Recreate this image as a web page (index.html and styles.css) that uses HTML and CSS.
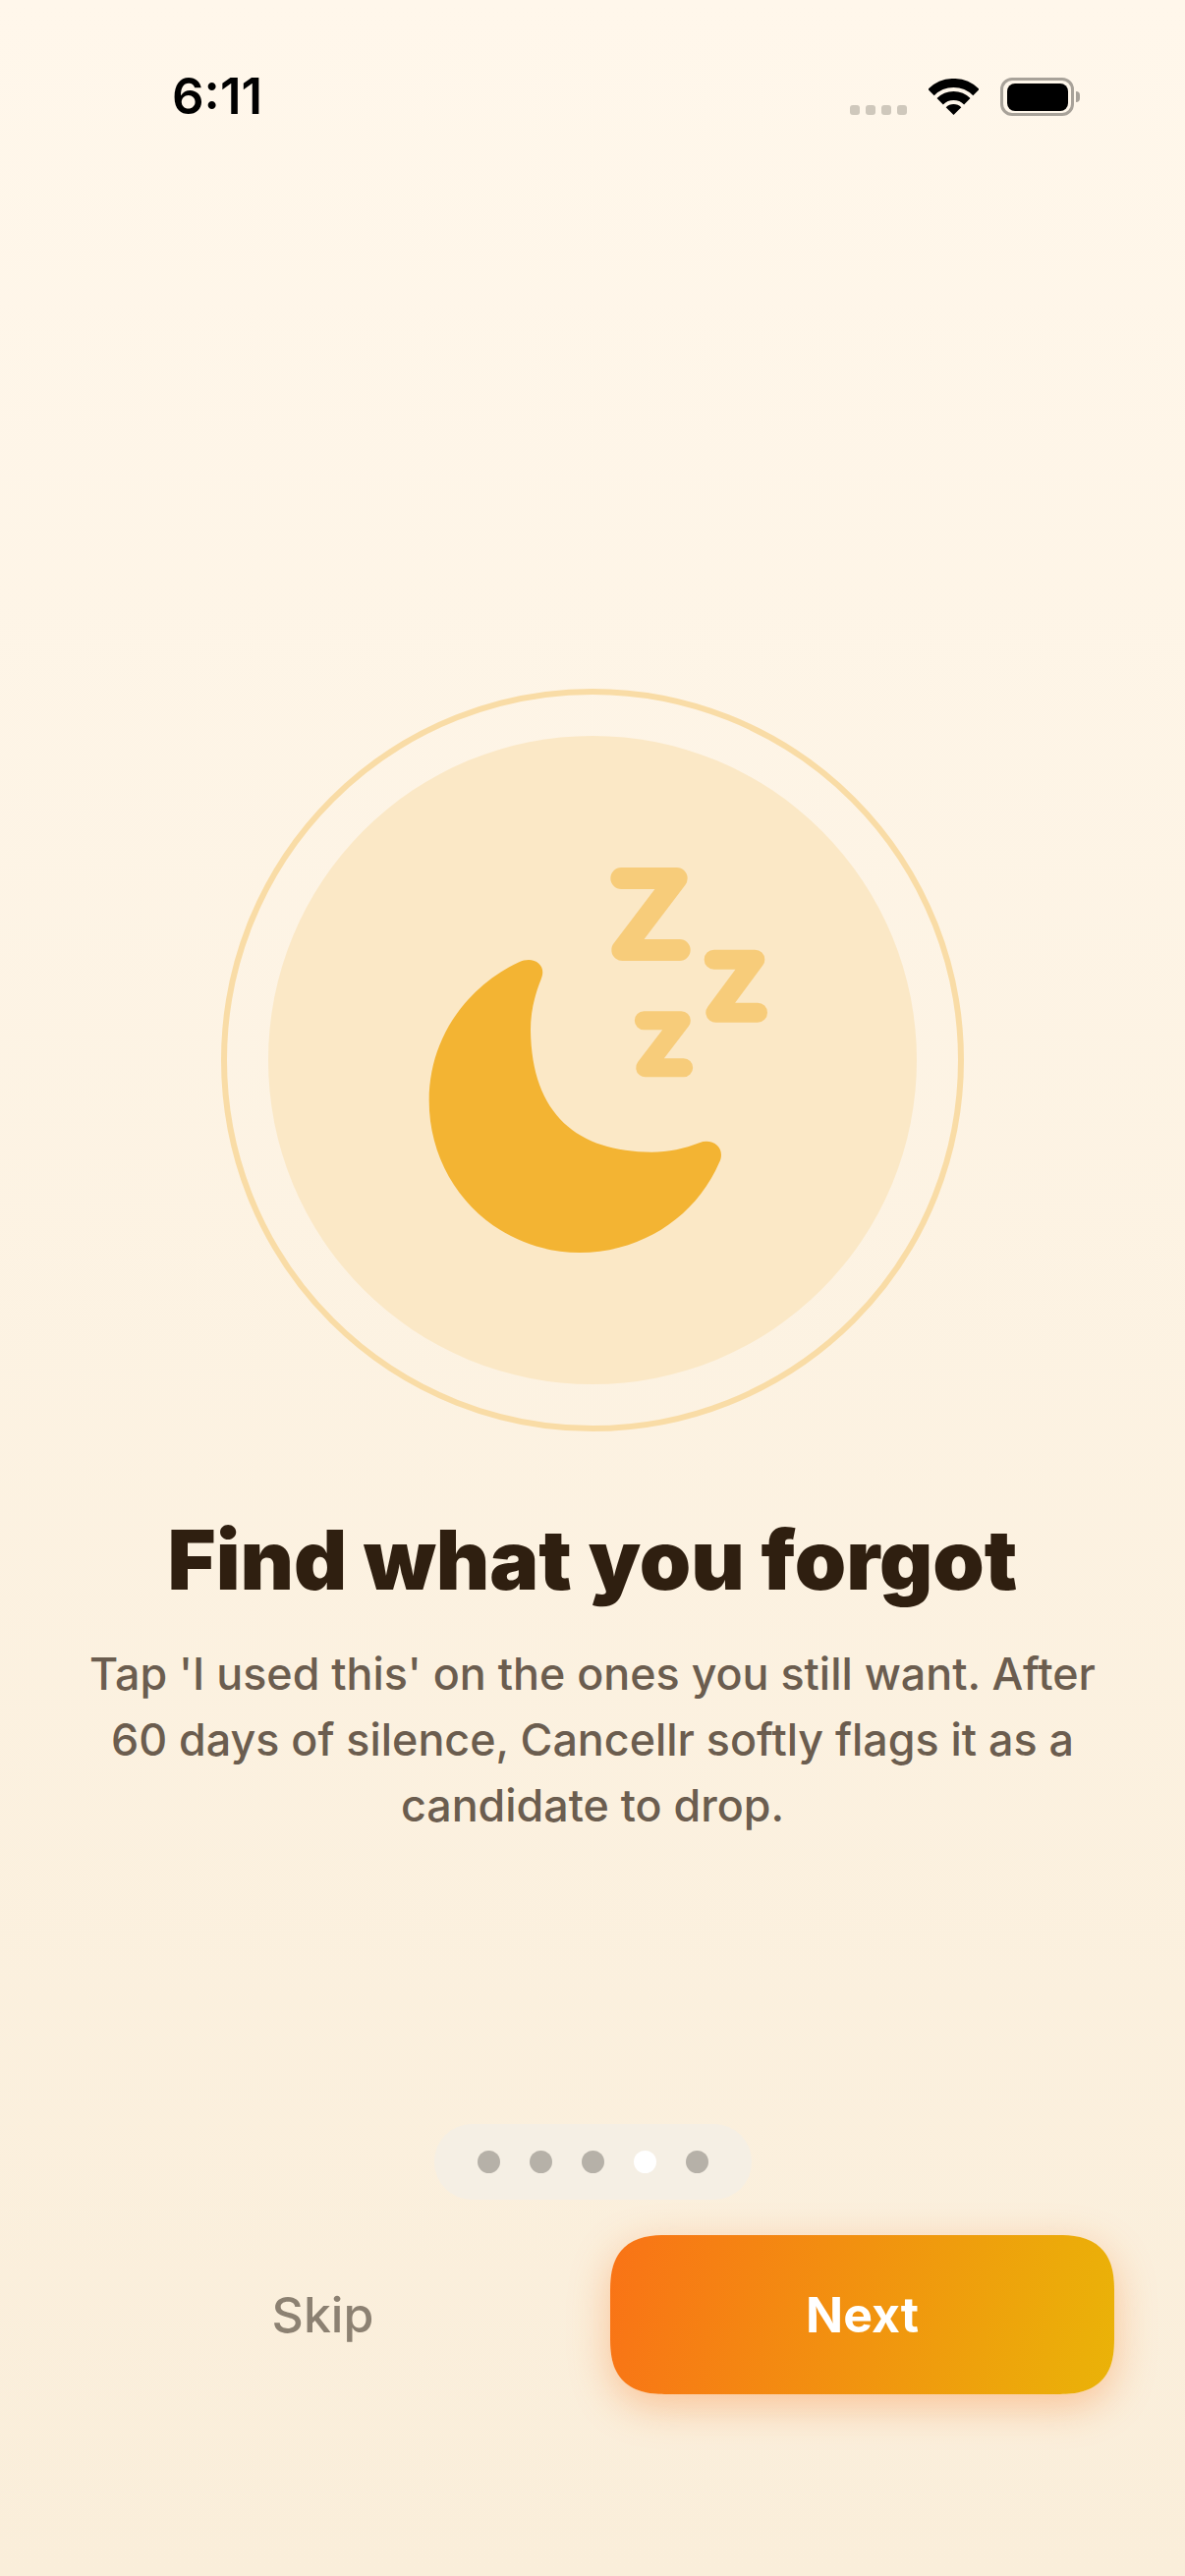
FILE: index.html
```html
<!DOCTYPE html>
<html>
<head>
    <title>Cancellr</title>
    <link rel="stylesheet" href="styles.css">
</head>
<body>
    <div class="screen">
        <div class="status-bar">
            <span class="time">6:11</span>
            <div class="status-icons">
                <div class="signal">
                    <span></span><span></span><span></span><span></span>
                </div>
                <svg class="wifi" width="51" height="37" viewBox="0 0 51 37">
                    <path d="M2.5 14A32.5 32.5 0 0 1 48.5 14M11.7 23.2A19.5 19.5 0 0 1 39.3 23.2" fill="none" stroke="#000" stroke-width="9"/>
                    <path d="M25.5 37L17.7 29.2A11 11 0 0 1 33.3 29.2Z" fill="#000"/>
                </svg>
                <div class="battery">
                    <div class="battery-level"></div>
                </div>
            </div>
        </div>

        <div class="hero">
            <div class="ring">
                <div class="disc">
                    <svg width="660" height="660" viewBox="-381 -303 1980 1980">
                        <path class="moon" d="M385 388C405 378 430 378 445 392C458 404 460 420 452 440C432 490 420 540 420 595C423 855 565 968 790 968C840 968 890 958 935 940C955 932 975 935 990 948C1003 960 1006 980 996 1000C925 1165 760 1275 570 1275C315 1275 110 1070 110 810C110 625 220 465 385 388Z"/>
                        <path class="zzz zzz-big" d="M697 132H866L700 351H875"/>
                        <path class="zzz zzz-mid" d="M980 380H1105L985 542H1113"/>
                        <path class="zzz zzz-small" d="M766 566H880L770 710H887"/>
                    </svg>
                </div>
            </div>
        </div>

        <div class="copy">
            <h1>Find what you forgot</h1>
            <p>Tap 'I used this' on the ones you still want. After 60 days of silence, Cancellr softly flags it as a candidate to drop.</p>
        </div>

        <div class="pager">
            <span class="pager-dot"></span>
            <span class="pager-dot"></span>
            <span class="pager-dot"></span>
            <span class="pager-dot active"></span>
            <span class="pager-dot"></span>
        </div>

        <div class="actions">
            <button class="skip">Skip</button>
            <button class="next">Next</button>
        </div>
    </div>
</body>
</html>
```

FILE: styles.css
```css
:root {
    --ink: #2f1f10;
    --body: #6b5d4f;
    --moon: #f3b433;
    --zzz: #f7cc7a;
}
* {
    box-sizing: border-box;
}
body {
    margin: 0;
    font-family: Inter, "Noto Sans", sans-serif;
    font-optical-sizing: none;
}
.screen {
    width: 1206px;
    height: 2622px;
    overflow: hidden;
    background: linear-gradient(180deg, #fff7eb, #faeeda);
    display: flex;
    flex-direction: column;
}
.status-bar {
    display: flex;
    justify-content: space-between;
    align-items: flex-end;
    height: 118px;
    padding: 0 113px 0 175px;
}
.time {
    font-size: 51px;
    font-weight: 600;
    line-height: 40px;
    color: #000;
}
.status-icons {
    display: flex;
    align-items: flex-end;
    gap: 22px;
}
.signal {
    display: flex;
    gap: 6px;
    margin-bottom: 1px;
}
.signal span {
    width: 10px;
    height: 10px;
    border-radius: 3px;
    background: #cfc8bc;
}
.wifi {
    margin-bottom: 1px;
}
.battery {
    position: relative;
    width: 75px;
    height: 39px;
    padding: 2.5px 3.5px;
    border: 3px solid #a8a299;
    border-radius: 12px;
}
.battery::after {
    content: "";
    position: absolute;
    right: -9px;
    top: 11px;
    width: 4px;
    height: 11px;
    border-radius: 0 4px 4px 0;
    background: #a8a299;
}
.battery-level {
    height: 100%;
    border-radius: 8px;
    background: #000;
}
.hero {
    display: flex;
    justify-content: center;
    padding-top: 583px;
}
.ring {
    display: flex;
    align-items: center;
    justify-content: center;
    width: 756px;
    height: 756px;
    border: 6px solid #f9dca6;
    border-radius: 50%;
}
.disc {
    width: 660px;
    height: 660px;
    border-radius: 50%;
    background: #fbe8c6;
}
.disc svg {
    display: block;
}
.moon {
    fill: var(--moon);
}
.zzz {
    fill: none;
    stroke: var(--zzz);
    stroke-linecap: round;
    stroke-linejoin: round;
}
.zzz-big {
    stroke-width: 66;
}
.zzz-mid {
    stroke-width: 60;
}
.zzz-small {
    stroke-width: 57;
}
.copy {
    padding: 83px 72px 0;
    text-align: center;
}
h1 {
    margin: 0;
    font-size: 84px;
    font-weight: 900;
    line-height: 96px;
    color: var(--ink);
}
p {
    margin: 35px 0 0;
    font-size: 44.8px;
    font-weight: 450;
    line-height: 67px;
    color: var(--body);
}
.pager {
    display: flex;
    align-self: center;
    gap: 30px;
    margin-top: 290px;
    padding: 27px 44px;
    border-radius: 38px;
    background: #f5efe4;
}
.pager-dot {
    width: 23px;
    height: 23px;
    border-radius: 50%;
    background: #b6b1a8;
}
.pager-dot.active {
    background: #fff;
}
.actions {
    display: flex;
    gap: 36px;
    margin-top: 36px;
    padding: 0 72px;
}
button {
    flex: 1;
    height: 162px;
    border: none;
    border-radius: 58px;
    corner-shape: superellipse(1.4);
    font-family: Inter, "Noto Sans", sans-serif;
    font-optical-sizing: none;
    font-size: 50px;
}
.skip {
    background: none;
    color: #8c8172;
    font-weight: 500;
}
.next {
    background: linear-gradient(100deg, #f97316, #eab308);
    color: #fff;
    font-weight: 700;
    box-shadow: 0 12px 40px rgba(249, 115, 22, 0.35);
}
```
